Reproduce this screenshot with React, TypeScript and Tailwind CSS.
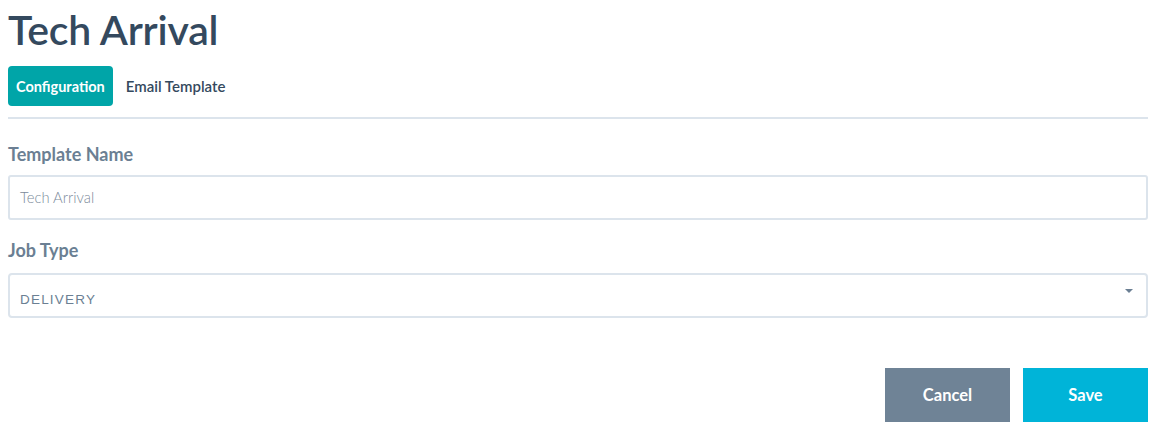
export default function App() {
  return (
    <div className="w-[1158px] h-[433px] bg-white px-[8px] pt-[4px] font-['Lato','Open_Sans',sans-serif]">
      <div className="w-[1140px]">
        <h1 className="text-[41px] leading-[52px] font-semibold text-[#34495e] tracking-[-0.2px]">Tech Arrival</h1>
        <div className="mt-[10px] flex items-center gap-[13px]">
          <button className="h-[40px] px-[8px] pt-[1px] rounded-[4px] bg-[#00a5a8] text-white text-[14.5px] font-bold">Configuration</button>
          <span className="text-[15px] pt-[1px] font-semibold text-[#34495e]">Email Template</span>
        </div>
        <div className="mt-[11px] h-[2px] bg-[#dce4ec]" />
        <div className="mt-[24px] text-[18px] font-bold text-[#6b7f93] leading-[22px]">Template Name</div>
        <div className="mt-[10px] h-[45px] border-2 border-[#dce4ec] rounded-[3px] flex items-center px-[10px]">
          <span className="text-[14.8px] font-light text-[#7b8a9a]">Tech Arrival</span>
        </div>
        <div className="mt-[19px] text-[18px] font-bold text-[#6b7f93] leading-[22px]">Job Type</div>
        <div className="mt-[12px] h-[45px] border-2 border-[#dce4ec] rounded-[4px] flex items-center justify-between pl-[10px] pr-[13px] pt-[10px]">
          <span className="text-[13.5px] tracking-[1.2px] text-[#6b7f93] font-['Liberation_Sans',sans-serif]">DELIVERY</span>
          <svg width="8" height="4" viewBox="0 0 8 4" className="-mt-[19px]"><path d="M0 0H8L4 4Z" fill="#6b7f93" /></svg>
        </div>
        <div className="mt-[50px] flex justify-end gap-[13px]">
          <button className="w-[125px] h-[54px] bg-[#6f8396] text-white text-[16.5px] font-bold">Cancel</button>
          <button className="w-[125px] h-[54px] bg-[#00b4d8] text-white text-[16.5px] font-bold">Save</button>
        </div>
      </div>
    </div>
  );
}
